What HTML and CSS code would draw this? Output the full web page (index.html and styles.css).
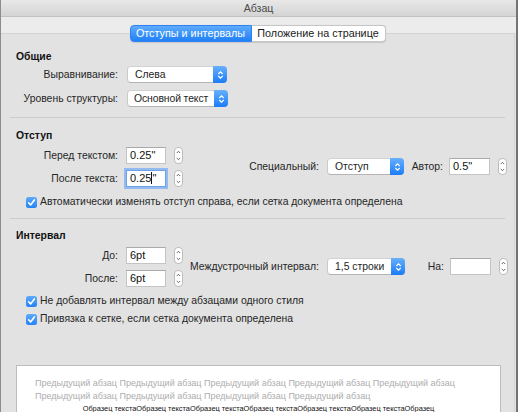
FILE: index.html
```html
<!DOCTYPE html>
<html lang="ru">
<head>
<meta charset="utf-8">
<title>Абзац</title>
<link rel="stylesheet" href="styles.css">
</head>
<body>
<div class="window">
  <div class="titlebar">Абзац</div>
  <div class="toparea"></div>
  <div class="panel">
    <div class="tabs">
      <div class="tab active">Отступы и интервалы</div>
      <div class="tab">Положение на странице</div>
    </div>

    <section class="sec first">
      <div class="heading">Общие</div>
      <div class="row">
        <div class="lbl">Выравнивание:</div>
        <div class="popup w100"><span class="val">Слева</span><span class="arrows"><svg width="7" height="10" viewBox="0 0 7 10"><path d="M1.3 4 L3.5 1.8 L5.7 4 M1.3 6 L3.5 8.2 L5.7 6" fill="none" stroke="#fff" stroke-width="1.1"/></svg></span></div>
      </div>
      <div class="row">
        <div class="lbl">Уровень структуры:</div>
        <div class="popup w101"><span class="val tight">Основной текст</span><span class="arrows"><svg width="7" height="10" viewBox="0 0 7 10"><path d="M1.3 4 L3.5 1.8 L5.7 4 M1.3 6 L3.5 8.2 L5.7 6" fill="none" stroke="#fff" stroke-width="1.1"/></svg></span></div>
      </div>
    </section>

    <div class="sep"></div>

    <section class="sec">
      <div class="heading">Отступ</div>
      <div class="fields">
        <div class="leftcol">
          <div class="row r1">
            <div class="lbl">Перед текстом:</div>
            <div class="input">0.25"</div>
            <div class="stepper"><svg width="9" height="17" viewBox="0 0 9 17"><path d="M2.8 6 L4.5 4.3 L6.2 6 M2.8 11 L4.5 12.7 L6.2 11" fill="none" stroke="#555" stroke-width="0.9"/></svg></div>
          </div>
          <div class="row r2">
            <div class="lbl">После текста:</div>
            <div class="input focus">0.25<span class="caret"></span>"</div>
            <div class="stepper"><svg width="9" height="17" viewBox="0 0 9 17"><path d="M2.8 6 L4.5 4.3 L6.2 6 M2.8 11 L4.5 12.7 L6.2 11" fill="none" stroke="#555" stroke-width="0.9"/></svg></div>
          </div>
        </div>
        <div class="midcol">
          <div class="mlbl">Специальный:</div>
          <div class="popup w77"><span class="val">Отступ</span><span class="arrows"><svg width="7" height="10" viewBox="0 0 7 10"><path d="M1.3 4 L3.5 1.8 L5.7 4 M1.3 6 L3.5 8.2 L5.7 6" fill="none" stroke="#fff" stroke-width="1.1"/></svg></span></div>
          <div class="rlbl">Автор:</div>
          <div class="input w41">0.5"</div>
          <div class="stepper"><svg width="9" height="17" viewBox="0 0 9 17"><path d="M2.8 6 L4.5 4.3 L6.2 6 M2.8 11 L4.5 12.7 L6.2 11" fill="none" stroke="#555" stroke-width="0.9"/></svg></div>
        </div>
      </div>
      <div class="check c1"><span class="box"><svg width="11" height="11" viewBox="0 0 11 11"><path d="M2.6 5.8 L4.6 7.9 L8.4 2.9" fill="none" stroke="#fff" stroke-width="1.6" stroke-linecap="round" stroke-linejoin="round"/></svg></span>Автоматически изменять отступ справа, если сетка документа определена</div>
    </section>

    <div class="sep sep2"></div>

    <section class="sec third">
      <div class="heading">Интервал</div>
      <div class="fields">
        <div class="leftcol">
          <div class="row r1">
            <div class="lbl">До:</div>
            <div class="input">6pt</div>
            <div class="stepper"><svg width="9" height="17" viewBox="0 0 9 17"><path d="M2.8 6 L4.5 4.3 L6.2 6 M2.8 11 L4.5 12.7 L6.2 11" fill="none" stroke="#555" stroke-width="0.9"/></svg></div>
          </div>
          <div class="row r2b">
            <div class="lbl">После:</div>
            <div class="input">6pt</div>
            <div class="stepper"><svg width="9" height="17" viewBox="0 0 9 17"><path d="M2.8 6 L4.5 4.3 L6.2 6 M2.8 11 L4.5 12.7 L6.2 11" fill="none" stroke="#555" stroke-width="0.9"/></svg></div>
          </div>
        </div>
        <div class="midcol">
          <div class="mlbl">Междустрочный интервал:</div>
          <div class="popup w78"><span class="val">1,5 строки</span><span class="arrows"><svg width="7" height="10" viewBox="0 0 7 10"><path d="M1.3 4 L3.5 1.8 L5.7 4 M1.3 6 L3.5 8.2 L5.7 6" fill="none" stroke="#fff" stroke-width="1.1"/></svg></span></div>
          <div class="rlbl">На:</div>
          <div class="input w41"></div>
          <div class="stepper"><svg width="9" height="17" viewBox="0 0 9 17"><path d="M2.8 6 L4.5 4.3 L6.2 6 M2.8 11 L4.5 12.7 L6.2 11" fill="none" stroke="#555" stroke-width="0.9"/></svg></div>
        </div>
      </div>
      <div class="check c2"><span class="box"><svg width="11" height="11" viewBox="0 0 11 11"><path d="M2.6 5.8 L4.6 7.9 L8.4 2.9" fill="none" stroke="#fff" stroke-width="1.6" stroke-linecap="round" stroke-linejoin="round"/></svg></span>Не добавлять интервал между абзацами одного стиля</div>
      <div class="check c3"><span class="box"><svg width="11" height="11" viewBox="0 0 11 11"><path d="M2.6 5.8 L4.6 7.9 L8.4 2.9" fill="none" stroke="#fff" stroke-width="1.6" stroke-linecap="round" stroke-linejoin="round"/></svg></span>Привязка к сетке, если сетка документа определена</div>
    </section>

    <div class="preview">
      <div class="prev">Предыдущий абзац Предыдущий абзац Предыдущий абзац Предыдущий абзац Предыдущий абзац</div>
      <div class="prev">Предыдущий абзац Предыдущий абзац Предыдущий абзац Предыдущий абзац</div>
      <div class="sample">Образец текстаОбразец текстаОбразец текстаОбразец текстаОбразец текстаОбразец текстаОбразец</div>
    </div>
  </div>
</div>
</body>
</html>
```

FILE: styles.css
```css
html, body {
  margin: 0;
  padding: 0;
  background: #e2e2e2;
}
body {
  font-family: "Liberation Sans", Arial, sans-serif;
  font-size: 10.4px;
  color: #262626;
}
.window {
  width: 515px;
  height: 412px;
  border-left: 1px solid #8c8c8c;
  border-right: 2px solid #747474;
  background: #e2e2e2;
  overflow: hidden;
  display: flex;
  flex-direction: column;
}
.titlebar {
  flex: none;
  height: 16px;
  line-height: 16px;
  text-align: center;
  color: #4a4a4a;
  font-size: 10.6px;
  background: linear-gradient(#e8e8e8, #d4d4d4);
  border-bottom: 1px solid #c2c2c2;
}
.toparea {
  flex: none;
  height: 16px;
  background: #ececec;
}
.panel {
  flex: none;
  height: 400px;
  background: #e2e2e2;
  border-top: 1px solid #d2d2d2;
  border-right: 1px solid #d6d6d6;
  margin-right: 1px;
}
.tabs {
  display: flex;
  justify-content: center;
  align-items: flex-start;
  margin-top: -9px;
}
.tab {
  box-sizing: border-box;
  width: 134px;
  height: 17px;
  line-height: 15px;
  text-align: center;
  white-space: nowrap;
  font-size: 10.8px;
  background: #fff;
  border: 1px solid #c6c6c6;
  border-left: none;
  border-radius: 0 4px 4px 0;
  color: #1a1a1a;
  box-shadow: 0 0.5px 1px rgba(0,0,0,0.12);
}
.tab.active {
  width: 122px;
  border: 1px solid #2f82f0;
  border-radius: 4px 0 0 4px;
  background: linear-gradient(#5eabfc, #1f80f7);
  color: #fff;
}
.sec {
  padding-left: 15px;
}
.sec.first {
  padding-top: 8px;
}
.heading {
  font-weight: bold;
  color: #111;
  line-height: 14px;
  height: 14px;
  margin-top: 11px;
}
.sec.first .heading {
  margin-top: 0;
}
.sec.third .heading {
  margin-top: 10px;
}
.row {
  display: flex;
  align-items: center;
  height: 17px;
  margin-left: -15px;
  white-space: nowrap;
}
.sec.first .row {
  margin-top: 2px;
}
.sec.first .row + .row {
  margin-top: 7px;
}
.lbl {
  width: 117px;
  text-align: right;
  margin-right: 9px;
  flex: none;
}
.popup {
  flex: none;
  height: 15px;
  display: flex;
  white-space: nowrap;
  background: #fff;
  border: 1px solid #cacaca;
  border-top-color: #d2d2d2;
  border-bottom-color: #b4b4b4;
  border-radius: 4px;
  box-sizing: content-box;
}
.popup .val {
  flex: 1;
  padding-left: 7px;
  line-height: 15px;
  color: #1e1e1e;
  overflow: hidden;
}
.popup .val.tight {
  padding-left: 6px;
  letter-spacing: -0.1px;
}
.popup .arrows {
  flex: none;
  width: 14px;
  margin: -1px -1px -1px 0;
  border-radius: 0 4px 4px 0;
  background: linear-gradient(#67b0fd, #1c7cf7);
  display: flex;
  align-items: center;
  justify-content: center;
}
.w100 { width: 98px; }
.w101 { width: 99px; }
.w77 { width: 75px; }
.w78 { width: 76px; }
.fields {
  display: flex;
  align-items: center;
  margin-top: 4px;
}
.leftcol {
  display: flex;
  flex-direction: column;
  flex: none;
}
.leftcol .row {
  margin-left: -15px;
}
.leftcol .lbl {
  margin-right: 8px;
}
.r2 { margin-top: 6px; }
.r2b { margin-top: 6px; }
.input {
  flex: none;
  width: 35px;
  height: 15px;
  line-height: 15px;
  padding-left: 3px;
  background: #fff;
  border: 1px solid #c4c4c4;
  border-top-color: #a9a9a9;
  color: #111;
  font-size: 11px;
  white-space: nowrap;
}
.input.focus {
  border-color: #6f9fe4;
  box-shadow: 0 0 0 2px #93bbf2;
}
.w41 { width: 36px; }
.caret {
  display: inline-block;
  width: 1px;
  height: 12px;
  background: #111;
  vertical-align: -2px;
}
.stepper {
  flex: none;
  width: 7px;
  height: 15px;
  margin-left: 8px;
  background: #fff;
  border: 1px solid #bcbcbc;
  border-radius: 4px;
  display: flex;
  align-items: center;
  justify-content: center;
  overflow: hidden;
}
.stepper svg {
  flex: none;
}
.midcol {
  display: flex;
  align-items: center;
  height: 17px;
  margin-top: -1px;
  white-space: nowrap;
}
.mlbl {
  flex: none;
  width: 136px;
  text-align: right;
  margin-right: 8px;
}
.rlbl {
  flex: none;
  width: 39px;
  text-align: right;
  margin-right: 6px;
}
.check {
  display: flex;
  align-items: center;
  height: 14px;
  line-height: 14px;
  padding-left: 10px;
  white-space: nowrap;
}
.check .box {
  flex: none;
  width: 11px;
  height: 11px;
  border-radius: 2.5px;
  background: linear-gradient(#5eaafc, #2482f6);
  margin-right: 3px;
  display: flex;
}
.c1 { margin-top: 8px; }
.c2 { margin-top: 7px; }
.c3 { margin-top: 4px; }
.sep {
  height: 1px;
  background: #cbcbcb;
  margin: 10px 9px 0 9px;
}
.sep2 {
  margin-top: 9px;
}
.preview {
  margin: 39px 13px 0 15px;
  height: 60px;
  background: #fff;
  border: 1px solid #bdbdbd;
  padding-top: 11px;
  font-size: 9px;
}
.prev {
  color: #adadad;
  line-height: 13px;
  padding-left: 18px;
  white-space: nowrap;
}
.sample {
  color: #111;
  font-size: 7.4px;
  line-height: 12px;
  text-align: center;
  white-space: nowrap;
}
```
